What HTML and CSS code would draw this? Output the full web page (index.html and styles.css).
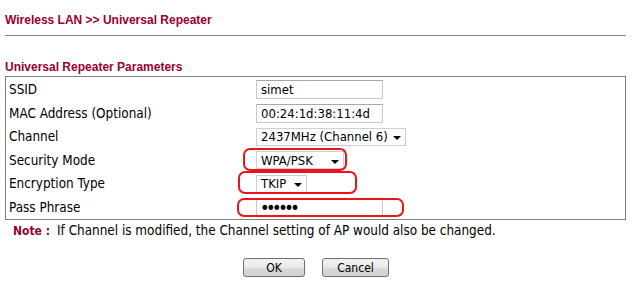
FILE: index.html
```html
<!DOCTYPE html>
<html lang="en">
<head>
    <meta charset="UTF-8">
    <title>Wireless LAN &gt;&gt; Universal Repeater</title>
    <link rel="stylesheet" href="styles.css">
</head>
<body>

    <div class="page-title">Wireless LAN &gt;&gt; Universal Repeater</div>
    <div class="title-line"></div>

    <div class="section-title">Universal Repeater Parameters</div>

    <div class="param-table">
        <div class="row">
            <div class="label">SSID</div>
            <div class="field"><input class="text-input" type="text" value="simet"></div>
        </div>
        <div class="row">
            <div class="label">MAC Address (Optional)</div>
            <div class="field"><input class="text-input" type="text" value="00:24:1d:38:11:4d"></div>
        </div>
        <div class="row">
            <div class="label">Channel</div>
            <div class="field">
                <div class="dropdown channel-select"><span>2437MHz (Channel 6)</span><span class="arrow"></span></div>
            </div>
        </div>
        <div class="row">
            <div class="label">Security Mode</div>
            <div class="field">
                <div class="dropdown mode-select"><span>WPA/PSK</span><span class="arrow"></span></div>
                <div class="mark mark-mode"></div>
            </div>
        </div>
        <div class="row">
            <div class="label">Encryption Type</div>
            <div class="field">
                <div class="dropdown enc-select"><span>TKIP</span><span class="arrow"></span></div>
                <div class="mark mark-enc"></div>
            </div>
        </div>
        <div class="row">
            <div class="label">Pass Phrase</div>
            <div class="field">
                <input class="text-input pass-input" type="password" value="simet1">
                <div class="mark mark-pass"></div>
            </div>
        </div>
    </div>

    <div class="note">
        <span class="note-label">Note :</span>
        <span class="note-text">If Channel is modified, the Channel setting of AP would also be changed.</span>
    </div>

    <div class="buttons">
        <button class="button ok-button">OK</button>
        <button class="button cancel-button">Cancel</button>
    </div>

</body>
</html>
```

FILE: styles.css
```css
body {
    margin: 0;
    padding: 0;
    background-color: #ffffff;
    font-family: "DejaVu Sans Condensed", "Noto Sans", sans-serif;
    font-size: 13.4px;
    color: #000000;
}

.page-title {
    font-family: "Liberation Sans", Arial, sans-serif;
    font-weight: bold;
    font-size: 12px;
    color: #990033;
    padding: 13px 0 0 5px;
    height: 18px;
}

.title-line {
    margin: 4px 6px 0 5px;
    border-top: 1px solid #808080;
}

.section-title {
    font-family: "Liberation Sans", Arial, sans-serif;
    font-weight: bold;
    font-size: 12px;
    color: #990033;
    padding: 24px 0 0 5px;
    height: 16px;
}

.param-table {
    margin: 0 6px 0 5px;
    border: 1px solid #808080;
    padding: 1px 0 0 0;
}

.row {
    display: grid;
    grid-template-columns: 250px 1fr;
    align-items: center;
    height: 23.5px;
}

.label {
    padding-left: 3px;
}

.field {
    position: relative;
    display: flex;
    align-items: center;
}

.text-input {
    width: 127px;
    height: 19px;
    box-sizing: border-box;
    border: 1px solid #c8c8c8;
    border-top-color: #a8a8a8;
    padding: 0 4px;
    margin: 0;
    font-family: "DejaVu Sans Condensed", "Noto Sans", sans-serif;
    font-size: 13px;
    color: #000000;
    outline: none;
}

.pass-input {
    font-size: 18px;
    line-height: 17px;
    letter-spacing: -3.5px;
    padding-left: 3px;
}

.dropdown {
    display: flex;
    align-items: center;
    justify-content: space-between;
    height: 18px;
    box-sizing: border-box;
    border: 1px solid #d0d0d0;
    padding: 0 4px 0 4px;
    white-space: nowrap;
    font-size: 13px;
}

.channel-select {
    width: 150px;
}

.mode-select {
    width: 88px;
}

.enc-select {
    width: 51px;
}

.arrow {
    width: 0;
    height: 0;
    margin-top: 3px;
    border-left: 4px solid transparent;
    border-right: 4px solid transparent;
    border-top: 4px solid #000000;
}

/* red hand-drawn marks over the fields */
.mark {
    position: absolute;
    border: 2px solid #e8141e;
    border-radius: 7px;
}

.mark-mode {
    left: -13px;
    top: -3px;
    width: 100px;
    height: 19px;
}

.mark-enc {
    left: -18px;
    top: -4px;
    width: 115px;
    height: 19px;
}

.mark-pass {
    left: -19px;
    top: 0;
    width: 163px;
    height: 15px;
}

.note {
    display: flex;
    gap: 7px;
    padding: 3px 0 0 13px;
}

.note-label {
    font-weight: bold;
    font-size: 12px;
    color: #990033;
    padding-top: 1px;
}

.buttons {
    display: flex;
    justify-content: center;
    gap: 17px;
    padding-top: 20px;
}

.button {
    height: 19px;
    box-sizing: border-box;
    border: 1px solid #707070;
    border-radius: 3px;
    background: linear-gradient(#f4f4f4, #e8e8e8 50%, #dadada 51%, #d2d2d2);
    font-family: "DejaVu Sans Condensed", "Noto Sans", sans-serif;
    font-size: 12px;
    color: #000000;
    padding: 0;
}

.ok-button {
    width: 62px;
}

.cancel-button {
    width: 67px;
}
```
